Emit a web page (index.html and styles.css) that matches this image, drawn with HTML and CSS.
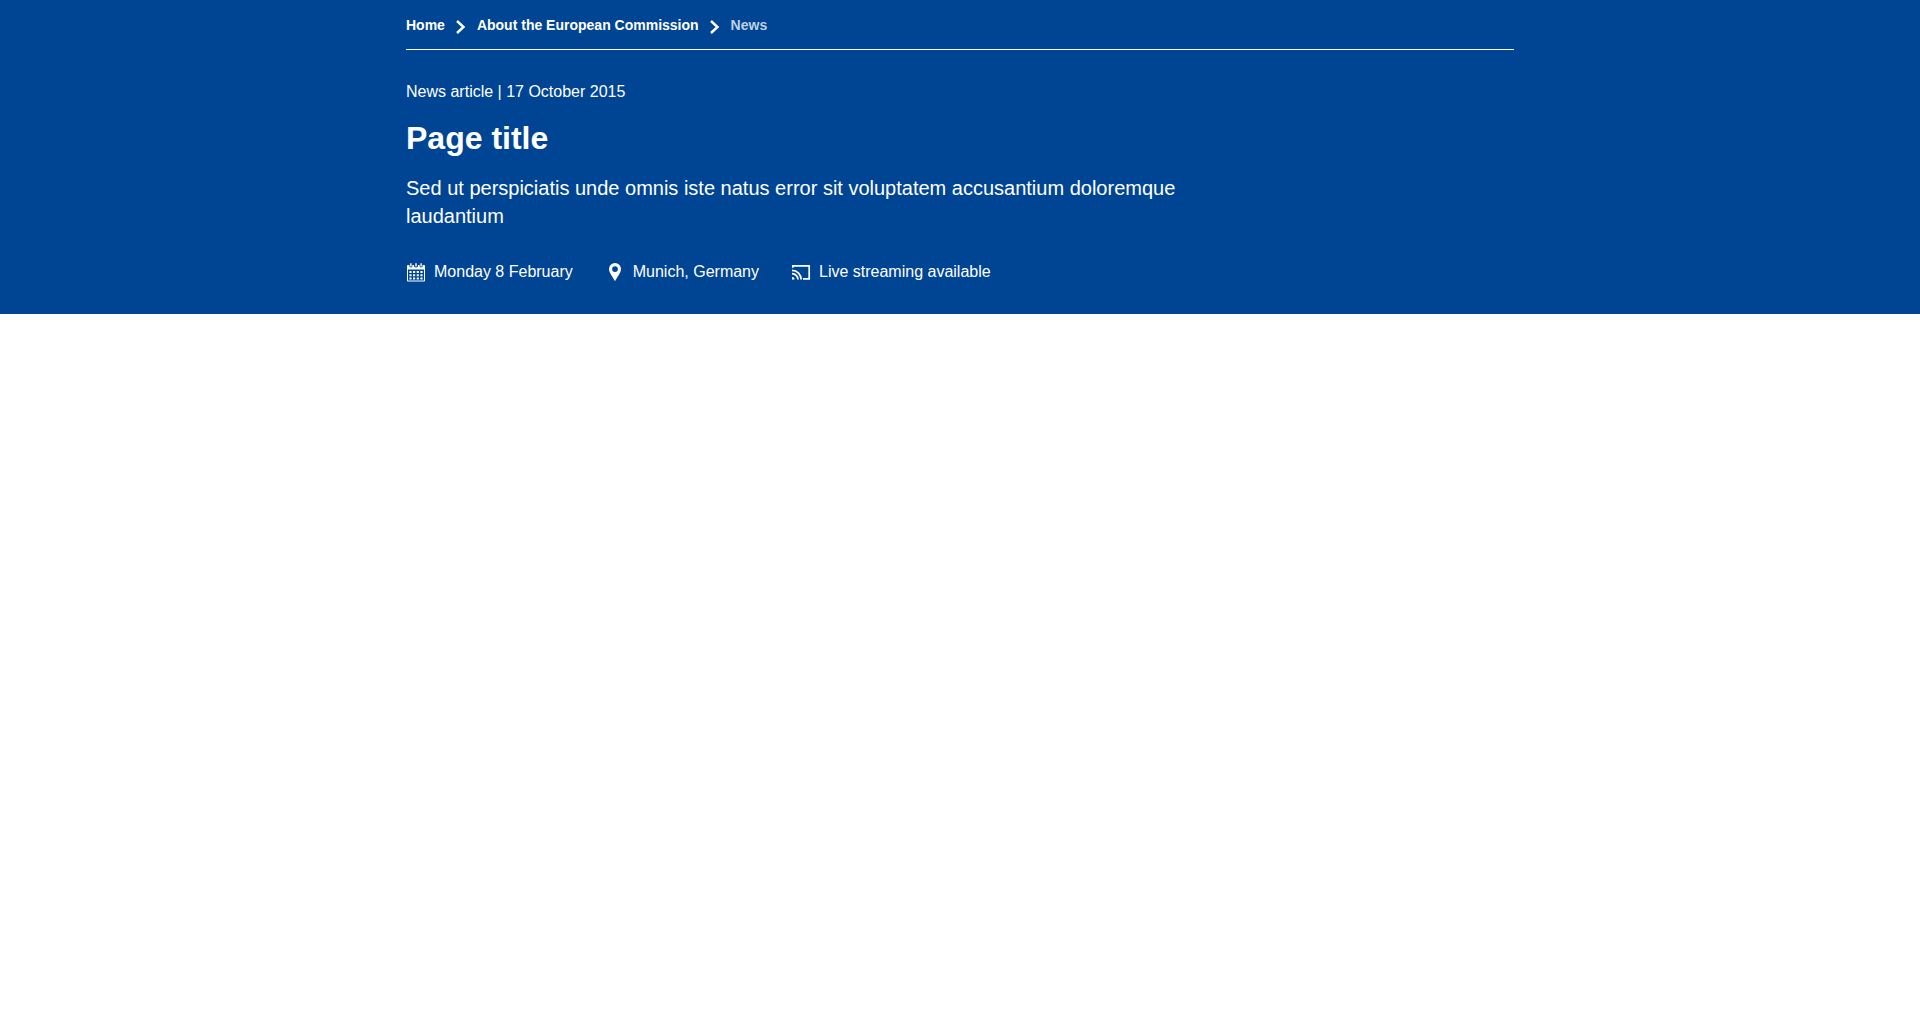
FILE: index.html
```html
<!DOCTYPE html>
<html lang="en">
<head>
<meta charset="utf-8">
<meta name="viewport" content="width=device-width, initial-scale=1">
<title>Page title</title>
<link rel="stylesheet" href="styles.css">
</head>
<body>
<header class="page-header">
  <div class="container">
    <nav class="breadcrumb" aria-label="Breadcrumb">
      <ol class="breadcrumb-list">
        <li class="breadcrumb-item">
          <a class="breadcrumb-link" href="#">Home</a>
          <svg class="breadcrumb-icon" viewBox="0 0 16 16" aria-hidden="true"><path d="M4 2 10.5 8 4 14" fill="none" stroke="currentColor" stroke-width="2.4"/></svg>
        </li>
        <li class="breadcrumb-item">
          <a class="breadcrumb-link" href="#">About the European Commission</a>
          <svg class="breadcrumb-icon" viewBox="0 0 16 16" aria-hidden="true"><path d="M4 2 10.5 8 4 14" fill="none" stroke="currentColor" stroke-width="2.4"/></svg>
        </li>
        <li class="breadcrumb-item breadcrumb-current" aria-current="page">News</li>
      </ol>
    </nav>
    <p class="meta">News article | 17 October 2015</p>
    <h1 class="title">Page title</h1>
    <p class="description">Sed ut perspiciatis unde omnis iste natus error sit voluptatem accusantium doloremque laudantium</p>
    <ul class="info-list">
      <li class="info-item">
        <svg class="info-icon" viewBox="0 0 20 20" fill="currentColor" aria-hidden="true">
          <path fill-rule="evenodd" d="M1.8 3H3.4V4.4Q4.9 6.4 6.4 4.4V3H8V4.4Q10 6.4 12 4.4V3H13.6V4.4Q15.1 6.4 16.6 4.4V3H18.2Q19 3 19 3.8V18.8Q19 19.6 18.2 19.6H1.8Q1 19.6 1 18.8V3.8Q1 3 1.8 3ZM2 7.6V18.6H18V7.6Z"/>
          <path d="M4.2 1.3h1.4v3.2H4.2zM9.3 1.3h1.4v3.2H9.3zM14.4 1.3h1.4v3.2h-1.4z"/>
          <path d="M3.4 9h2.2v2H3.4zM7 9h2.2v2H7zM10.7 9h2.2v2h-2.2zM14.4 9h2.2v2h-2.2zM3.4 12.2h2.2v2H3.4zM7 12.2h2.2v2H7zM10.7 12.2h2.2v2h-2.2zM14.4 12.2h2.2v2h-2.2zM3.4 15.4h2.2v2H3.4zM7 15.4h2.2v2H7zM10.7 15.4h2.2v2h-2.2zM14.4 15.4h2.2v2h-2.2z"/>
        </svg>
        Monday 8 February
      </li>
      <li class="info-item">
        <svg class="info-icon" viewBox="0 0 20 20" fill="currentColor" aria-hidden="true">
          <path fill-rule="evenodd" d="M10 1a6 6 0 0 0-6 6c0 4 4 8 6 12.3C12 15 16 11 16 7a6 6 0 0 0-6-6Zm0 3.2a2.9 2.9 0 1 1 0 5.8 2.9 2.9 0 0 1 0-5.8Z"/>
        </svg>
        Munich, Germany
      </li>
      <li class="info-item">
        <svg class="info-icon" viewBox="0 0 20 20" fill="none" stroke="currentColor" stroke-width="1.7" aria-hidden="true">
          <path d="M1.8 5.8V3.8H18.2V16.8H12M1 8.3a9.2 9.2 0 0 1 9.2 9.3M1 11.6a6 6 0 0 1 6 6"/>
          <path d="M1 15a2.6 2.6 0 0 1 2.6 2.6H1Z" fill="currentColor" stroke="none"/>
        </svg>
        Live streaming available
      </li>
    </ul>
  </div>
</header>
</body>
</html>
```
FILE: styles.css
```css
body {
  margin: 0;
  background: #fff;
  font-family: Arial, "Liberation Sans", sans-serif;
  font-size: 16px;
  line-height: 20px;
}

.page-header {
  background: #004494;
  color: #fff;
  padding-bottom: 32px;
}

.container {
  box-sizing: border-box;
  max-width: 1140px;
  margin: 0 auto;
  padding: 0 16px;
}

.breadcrumb {
  border-bottom: 1px solid #fff;
  padding: 15px 0 14px;
}

.breadcrumb-list,
.info-list {
  display: flex;
  flex-wrap: wrap;
  list-style: none;
  margin: 0;
  padding: 0;
}

.breadcrumb-list {
  font-size: 14px;
  font-weight: 700;
}

.breadcrumb-item {
  display: flex;
  align-items: flex-end;
}

.breadcrumb-link {
  color: inherit;
  text-decoration: none;
}

.breadcrumb-link:hover {
  text-decoration: underline;
}

.breadcrumb-icon {
  width: 16px;
  height: 16px;
  margin: 0 8px;
}

.breadcrumb-current {
  color: #bfd0e4;
}

.meta {
  margin: 32px 0 16px;
}

.title {
  margin: 0 0 16px;
  font-size: 32px;
  line-height: 40px;
}

.description {
  max-width: 800px;
  margin: 0 0 32px;
  font-size: 20px;
  line-height: 28px;
}

.info-list {
  gap: 16px 32px;
}

.info-item {
  display: flex;
  align-items: center;
  gap: 8px;
}

.info-icon {
  width: 20px;
  height: 20px;
}
```
